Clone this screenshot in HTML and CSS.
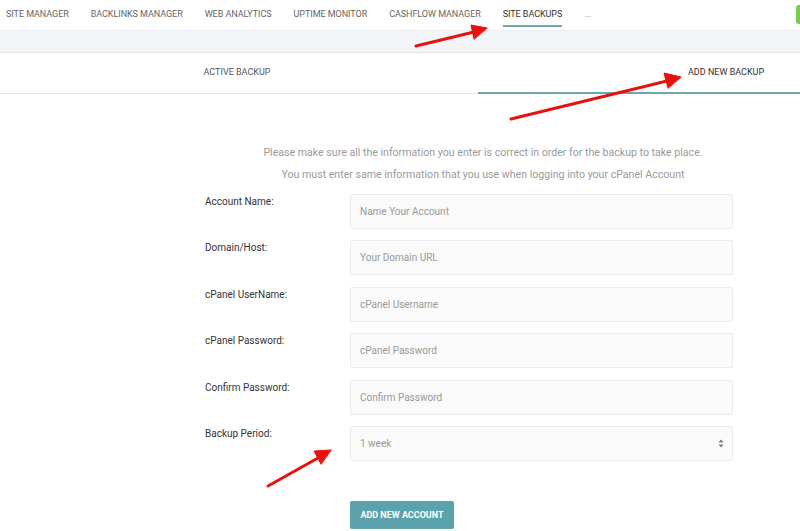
FILE: index.html
```html
<!DOCTYPE html>
<html>
<head>
<meta charset="utf-8">
<link rel="stylesheet" href="styles.css">
</head>
<body>
<div class="page">
  <nav class="topnav">
    <a class="nav-item">SITE MANAGER</a>
    <a class="nav-item">BACKLINKS MANAGER</a>
    <a class="nav-item">WEB ANALYTICS</a>
    <a class="nav-item">UPTIME MONITOR</a>
    <a class="nav-item">CASHFLOW MANAGER</a>
    <a class="nav-item active">SITE BACKUPS</a>
    <a class="nav-item more">...</a>
    <span class="green-pill"></span>
  </nav>
  <div class="band"></div>
  <div class="tabs">
    <div class="tab tab-left">ACTIVE BACKUP</div>
    <div class="tab tab-right active">ADD NEW BACKUP</div>
  </div>
  <main class="content">
    <div class="intro">
      <p>Please make sure all the information you enter is correct in order for the backup to take place.</p>
      <p>You must enter same information that you use when logging into your cPanel Account</p>
    </div>
    <form class="form">
      <label class="label">Account Name:</label>
      <div class="field">Name Your Account</div>
      <label class="label">Domain/Host:</label>
      <div class="field">Your Domain URL</div>
      <label class="label">cPanel UserName:</label>
      <div class="field">cPanel Username</div>
      <label class="label">cPanel Password:</label>
      <div class="field">cPanel Password</div>
      <label class="label">Confirm Password:</label>
      <div class="field">Confirm Password</div>
      <label class="label">Backup Period:</label>
      <div class="field select">1 week
        <svg class="caret" width="6" height="9" viewBox="0 0 6 9"><path d="M3 0.5L5.5 3.5H0.5Z M3 8.5L5.5 5.5H0.5Z" fill="#777"/></svg>
      </div>
      <span></span>
      <div class="actions"><button type="button" class="btn">ADD NEW ACCOUNT</button></div>
    </form>
  </main>
  <svg class="arrows" width="800" height="531" viewBox="0 0 800 531">
    <g stroke="#e8120c" stroke-width="3" stroke-linecap="round" fill="#e8120c">
      <line x1="416" y1="46" x2="474" y2="32"/>
      <polygon points="487,28 471,25 474,39" stroke-width="1"/>
      <line x1="511" y1="119" x2="667" y2="81"/>
      <polygon points="681,77 664,73 668,88" stroke-width="1"/>
      <line x1="268" y1="486" x2="318" y2="458"/>
      <polygon points="331,450 314,451 321,464" stroke-width="1"/>
    </g>
  </svg>
</div>
</body>
</html>
```

FILE: styles.css
```css
* { box-sizing: border-box; }
html, body { margin: 0; padding: 0; background: #fff; }
body {
  font-family: Roboto, "Liberation Sans", sans-serif;
  color: #333;
  width: 800px;
  height: 531px;
  overflow: hidden;
}
.page { position: relative; width: 800px; height: 531px; }

.topnav {
  display: flex;
  align-items: stretch;
  height: 30px;
  padding-left: 6px;
  gap: 22px;
}
.nav-item {
  display: flex;
  align-items: center;
  font-size: 9px;
  color: #666;
  letter-spacing: -0.05px;
  border-bottom: 2px solid transparent;
  padding-top: 2px;
  margin-bottom: 3px;
}
.nav-item.active { color: #333; border-bottom-color: #6aa7ae; }
.nav-item.more { color: #888; }
.green-pill {
  margin-left: auto;
  align-self: flex-start;
  margin-top: 5px;
  width: 4px;
  height: 19px;
  background: #75cf4d;
  border-radius: 3px 0 0 3px;
}

.band {
  height: 23px;
  background: #f3f5f8;
  border-top: 1px solid #e9ebee;
  border-bottom: 1px solid #e2e4e7;
}

.tabs {
  display: flex;
  height: 41px;
  border-bottom: 1px solid #e6e6e6;
}
.tab {
  display: flex;
  align-items: center;
  font-size: 9px;
  color: #555;
  padding-bottom: 2px;
}
.tab-left { width: 474px; justify-content: center; }
.tab-right {
  flex: 1;
  padding-left: 210px;
  color: #333;
  border-bottom: 2px solid #6aa7ae;
  margin-bottom: -1px;
  margin-left: 4px;
}

.content { padding-top: 52px; }
.intro {
  padding-left: 166px;
  text-align: center;
  font-size: 10.6px;
  color: #9a9a9a;
}
.intro p { margin: 0 0 9px; line-height: 13px; }
.intro p:last-child { margin-bottom: 0; }

.form {
  display: grid;
  grid-template-columns: 145px 383px;
  grid-auto-rows: 35px;
  row-gap: 11.4px;
  margin-left: 205px;
  margin-top: 13px;
}
.label {
  font-size: 10px;
  color: #333;
  line-height: 13px;
  padding-top: 1px;
}
.field {
  display: flex;
  align-items: center;
  padding-left: 9px;
  font-size: 10px;
  color: #999;
  background: #fafafa;
  border: 1px solid #ececec;
  border-radius: 2px;
}
.select { justify-content: space-between; padding-right: 8px; }
.caret { display: block; }
.actions { margin-top: 29px; }
.btn {
  font-family: inherit;
  font-size: 9px;
  font-weight: 700;
  color: #fff;
  background: #5ba3ac;
  border: 0;
  border-radius: 2px;
  width: 104px;
  height: 28px;
  padding: 0;
}

.arrows { position: absolute; left: 0; top: 0; pointer-events: none; }
```
